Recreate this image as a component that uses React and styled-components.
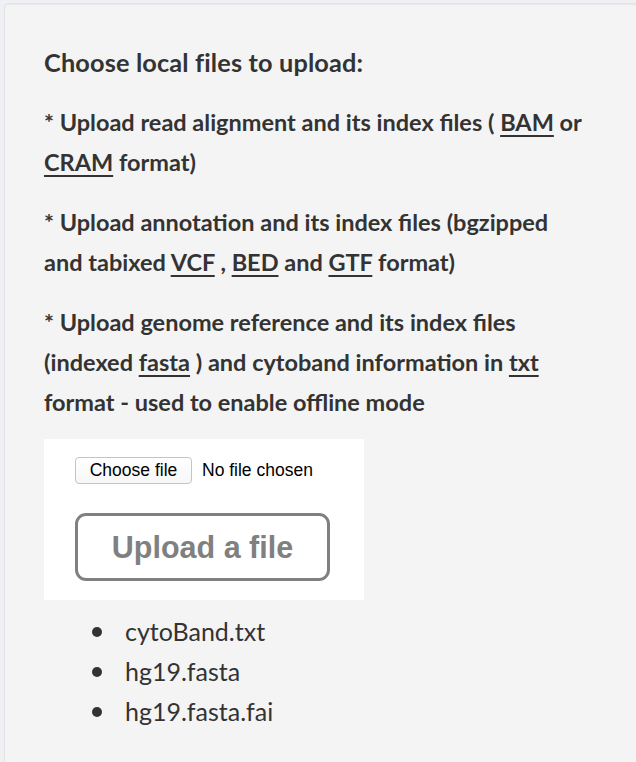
import React from 'react';
import styled, { createGlobalStyle } from 'styled-components';

const GlobalStyle = createGlobalStyle`
  html, body {
    margin: 0;
    padding: 0;
    overflow: hidden;
    background: #eef0f4;
  }
`;

const Well = styled.div`
  width: 660px;
  min-height: 800px;
  box-sizing: border-box;
  margin: 3px 0 0 4px;
  padding: 38px 76px 20px 39px;
  background: #f4f4f4;
  border: 1px solid #e3e3e3;
  border-radius: 4px;
  box-shadow: inset 0 1px 1px rgba(0, 0, 0, 0.05);
  font-family: Lato, 'Liberation Sans', sans-serif;
  color: #333333;
`;

const Paragraph = styled.p`
  margin: 0 0 20px 0;
  font-size: ${(p) => (p.$title ? '25.3px' : '23.5px')};
  letter-spacing: ${(p) => (p.$title ? '0.15px' : '0')};
  font-weight: 700;
  line-height: 40px;
`;

const Link = styled.span`
  text-decoration: underline;
  text-underline-offset: 4px;
  text-decoration-thickness: 2px;
`;

const UploadBox = styled.div`
  width: 320px;
  height: 161px;
  box-sizing: border-box;
  margin-top: -3px;
  padding: 18px 0 0 31px;
  background: #ffffff;
  display: flex;
  flex-direction: column;
  align-items: flex-start;
`;

const FileRow = styled.div`
  display: flex;
  align-items: center;
  gap: 10px;
  font-family: 'Liberation Sans', Arial, sans-serif;
  font-size: 17.5px;
  color: #000;
`;

const ChooseButton = styled.button`
  height: 27px;
  width: 117px;
  padding: 0;
  font-family: 'Liberation Sans', Arial, sans-serif;
  font-size: 17.5px;
  color: #000;
  background: linear-gradient(#ffffff, #f7f7f7);
  border: 1px solid #c4c4c4;
  border-radius: 4px;
`;

const UploadButton = styled.button`
  margin-top: 29px;
  width: 255px;
  height: 68px;
  box-sizing: border-box;
  padding: 0;
  background: #ffffff;
  border: 3px solid #808080;
  border-radius: 11px;
  font-family: 'Liberation Sans', Arial, sans-serif;
  font-weight: 700;
  font-size: 30.5px;
  color: #808080;
`;

const FileList = styled.ul`
  margin: 11px 0 0 0;
  padding-left: 48px;
  list-style: none;
  font-size: 25px;
  line-height: 40px;
  font-weight: 400;
`;

const FileItem = styled.li`
  display: flex;
  align-items: center;

  &::before {
    content: '';
    width: 10px;
    height: 10px;
    margin: 2px 23px 0 0;
    border-radius: 50%;
    background: #333333;
  }
`;

const App = () => {
  return (
    <>
      <GlobalStyle />
      <Well>
        <Paragraph $title>Choose local files to upload:</Paragraph>
        <Paragraph>
          * Upload read alignment and its index files ( <Link>BAM</Link> or{' '}
          <Link>CRAM</Link> format)
        </Paragraph>
        <Paragraph>
          * Upload annotation and its index files (bgzipped and tabixed{' '}
          <Link>VCF</Link> , <Link>BED</Link> and <Link>GTF</Link> format)
        </Paragraph>
        <Paragraph>
          * Upload genome reference and its index files (indexed{' '}
          <Link>fasta</Link> ) and cytoband information in <Link>txt</Link>{' '}
          format - used to enable offline mode
        </Paragraph>
        <UploadBox>
          <FileRow>
            <ChooseButton>Choose file</ChooseButton>
            <span>No file chosen</span>
          </FileRow>
          <UploadButton>Upload a file</UploadButton>
        </UploadBox>
        <FileList>
          <FileItem>cytoBand.txt</FileItem>
          <FileItem>hg19.fasta</FileItem>
          <FileItem>hg19.fasta.fai</FileItem>
        </FileList>
      </Well>
    </>
  );
};

export default App;
